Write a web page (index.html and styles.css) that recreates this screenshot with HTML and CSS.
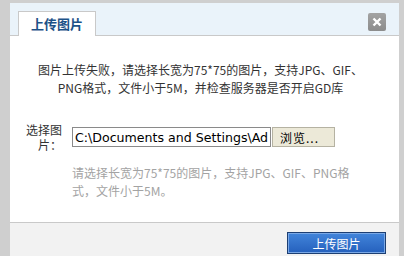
FILE: index.html
```html
<!DOCTYPE html>
<html lang="zh-CN">
  <head>
    <meta charset="UTF-8" />
    <title>上传图片</title>
    <link rel="stylesheet" href="styles.css">
  </head>
  <body>
    <div class="dialog">
      <div class="dialog-head">
        <div class="tab">上传图片</div>
        <span class="close">
          <svg width="10" height="10" viewBox="0 0 10 10"><path d="M1.5 1.5 L8.5 8.5 M8.5 1.5 L1.5 8.5" stroke="#fff" stroke-width="2.4" /></svg>
        </span>
      </div>

      <div class="dialog-body">
        <p class="message">图片上传失败，请选择长宽为75*75的图片，支持JPG、GIF、<br>PNG格式，文件小于5M，并检查服务器是否开启GD库</p>

        <div class="field">
          <label for="pic">选择图片：</label>
          <input type="text" id="pic" class="file-path" value="C:\Documents and Settings\Administrator\My Documents\photo.jpg" />
          <button type="button" class="browse">浏览...</button>
        </div>
        <p class="hint">请选择长宽为75*75的图片，支持JPG、GIF、PNG格式，文件小于5M。</p>
      </div>

      <div class="dialog-foot">
        <button type="submit" class="upload">上传图片</button>
      </div>
    </div>
  </body>
</html>
```

FILE: styles.css
```css
* { box-sizing: border-box; }
body {
  margin: 0;
  background: #cfcfcf;
  font-family: "Noto Sans CJK SC", sans-serif;
  font-size: 12px;
  color: #333;
}
.dialog {
  margin: 3px 5px 0 10px;
  height: 253px;
  background: #fff;
  display: flex;
  flex-direction: column;
}
.dialog-head {
  height: 33px;
  background: #eaf3fa;
  border-bottom: 1px solid #c9c9c9;
  display: flex;
  justify-content: space-between;
  align-items: flex-end;
  padding: 0 13px 0 8px;
}
.tab {
  width: 78px;
  height: 25px;
  margin-bottom: -1px;
  background: #fff;
  border: 1px solid #c9c9c9;
  border-bottom: none;
  color: #1d5288;
  font-size: 13px;
  font-weight: bold;
  line-height: 23px;
  text-align: center;
}
.close {
  align-self: flex-start;
  margin-top: 10px;
  width: 18px;
  height: 18px;
  border-radius: 2px;
  background: linear-gradient(#a3a3a3, #8c8c8c);
  display: flex;
  align-items: center;
  justify-content: center;
}
.dialog-body {
  flex: 1;
  padding: 25px 0 0 16px;
}
.message {
  margin: 0;
  padding-right: 24px;
  line-height: 18px;
  text-align: center;
}
.field {
  margin-top: 25px;
  display: flex;
  align-items: center;
}
.field label {
  width: 36px;
  margin-right: 10px;
  line-height: 15px;
  text-align: right;
}
.file-path {
  width: 199px;
  height: 20px;
  margin: 0;
  padding: 0 2px;
  border: 1px solid #8a8a8a;
  font-family: "DejaVu Sans", sans-serif;
  font-size: 12.6px;
  color: #000;
}
.browse {
  width: 63px;
  height: 20px;
  margin: 0 0 0 1px;
  padding: 0 0 0 7px;
  background: #ece9d8;
  border: 1px solid #b5b2a2;
  font-family: inherit;
  font-size: 12px;
  letter-spacing: 1px;
  color: #000;
  text-align: left;
}
.hint {
  width: 296px;
  margin: 12px 0 0 46px;
  line-height: 18px;
  color: #a3a3a3;
}
.dialog-foot {
  height: 34px;
  background: #f2f2f2;
  border-top: 1px solid #c9c9c9;
  display: flex;
  justify-content: flex-end;
  align-items: flex-start;
  padding: 9px 13px 0 0;
}
.upload {
  width: 99px;
  height: 22px;
  background: linear-gradient(#4285db, #2560bd);
  border: 1px solid #1d3f73;
  box-shadow: inset 0 0 0 1px #7aa8e6;
  color: #fff;
  font-family: inherit;
  font-size: 12px;
  cursor: pointer;
}
```
